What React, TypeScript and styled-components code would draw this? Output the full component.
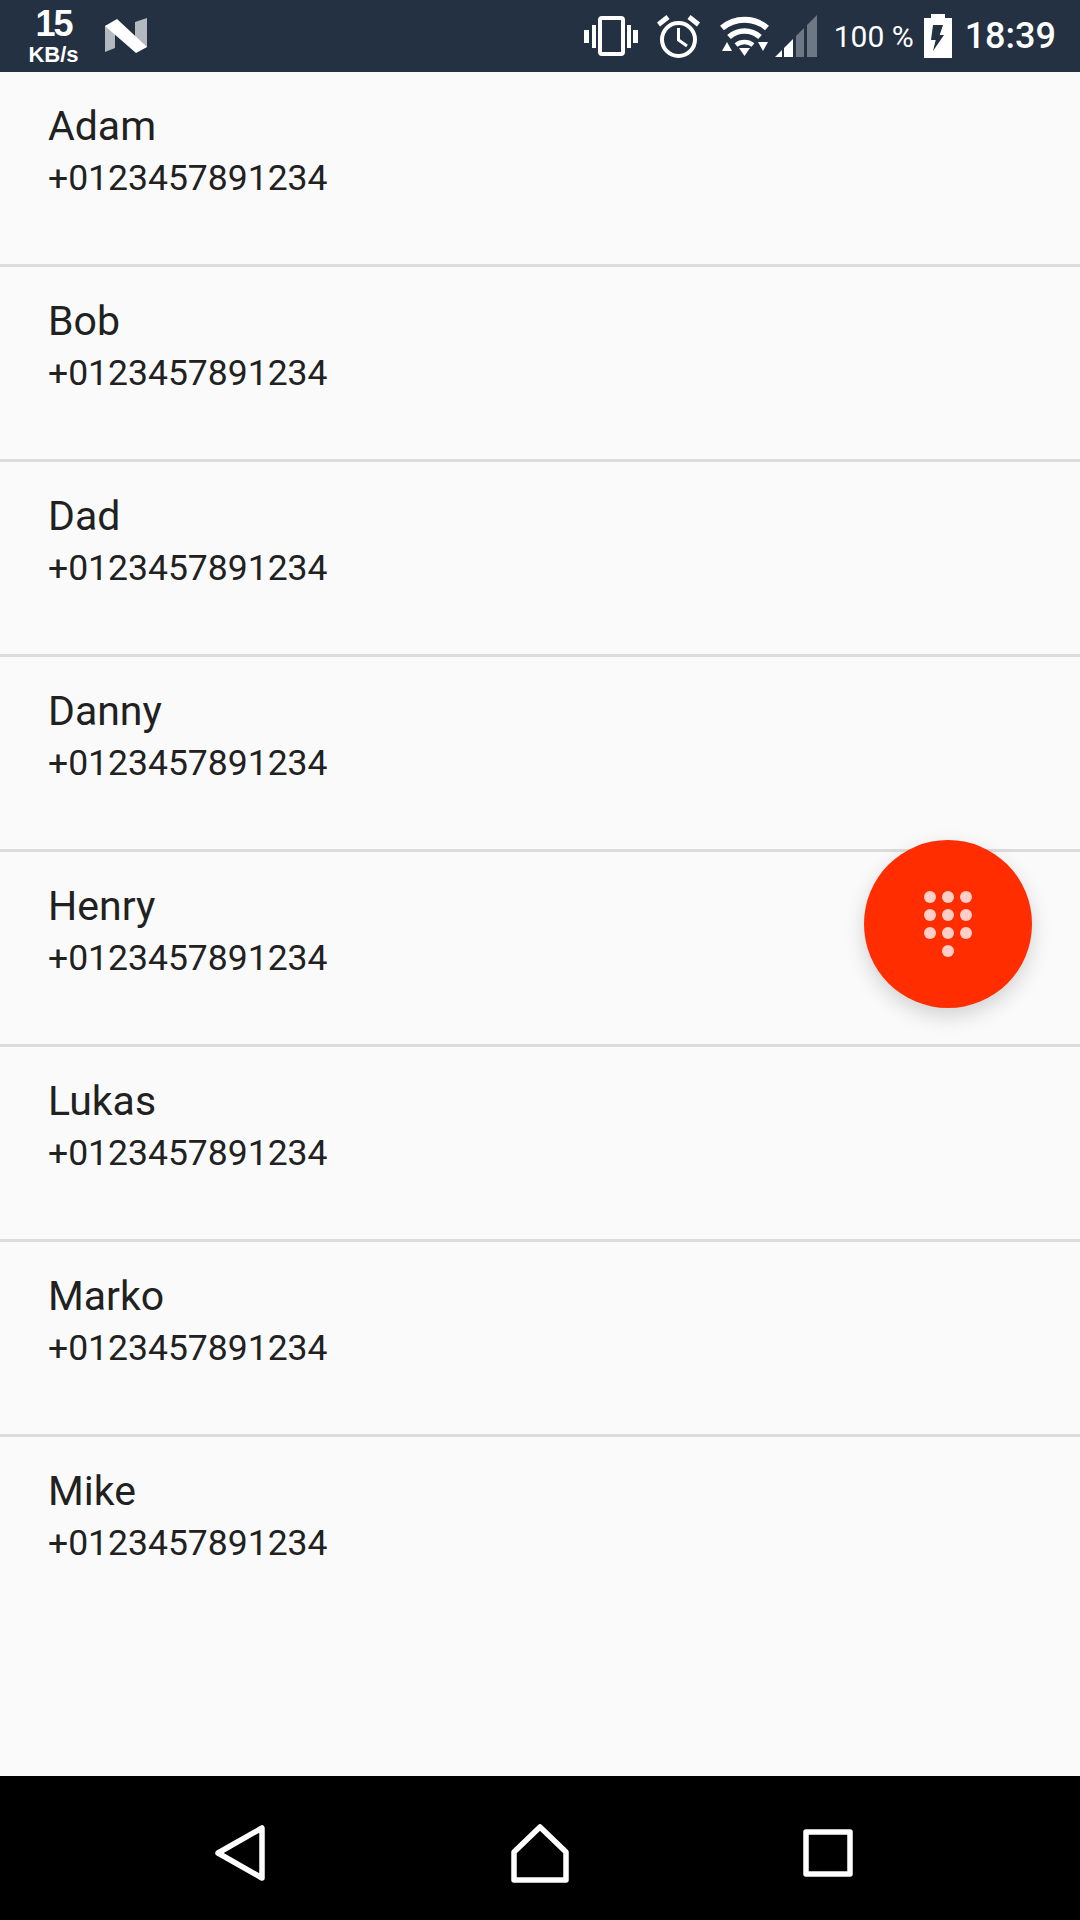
import styled, { createGlobalStyle } from 'styled-components'

const GlobalStyle = createGlobalStyle`
  html, body {
    margin: 0;
    padding: 0;
    background: #fafafa;
  }
`

const Screen = styled.div`
  position: relative;
  width: 1080px;
  height: 1920px;
  display: flex;
  flex-direction: column;
  overflow: hidden;
  background: #fafafa;
  font-family: Roboto, sans-serif;
`

const StatusBar = styled.div`
  height: 72px;
  flex: none;
  display: flex;
  align-items: center;
  padding: 0 24px 0 28px;
  background: #233142;
  color: white;
`

const NetSpeed = styled.div`
  width: 51px;
  display: flex;
  flex-direction: column;
  align-items: center;
  font-family: 'Liberation Sans', Arial, sans-serif;
  font-weight: bold;
`

const NetValue = styled.div`
  font-size: 36px;
  line-height: 36px;
  letter-spacing: -2px;
`

const NetUnit = styled.div`
  font-size: 22px;
  line-height: 25px;
`

const Spacer = styled.div`
  flex: 1;
`

const Icon = styled.svg<{ $left?: number }>`
  display: block;
  flex: none;
  margin-left: ${p => p.$left || 0}px;
`

const Percent = styled.div`
  margin-left: 16px;
  font-size: 30px;
  white-space: nowrap;
`

const Clock = styled.div`
  margin-left: 13px;
  font-size: 36px;
  font-weight: 500;
`

const ContactList = styled.div`
  flex: 1;
`

const Row = styled.div`
  height: 195px;
  box-sizing: border-box;
  padding: 29px 48px 0;
  border-bottom: 3px solid #dcdcdc;
  color: #212121;

  &:last-child {
    border-bottom: none;
  }
`

const Name = styled.div`
  font-size: 41px;
  line-height: 50px;
`

const Phone = styled.div`
  font-size: 35.5px;
  line-height: 54px;
`

const Fab = styled.div`
  position: absolute;
  left: 864px;
  top: 840px;
  width: 168px;
  height: 168px;
  border-radius: 50%;
  background: #ff2d00;
  box-shadow: 0 8px 20px rgba(0, 0, 0, 0.16);
  display: flex;
  align-items: center;
  justify-content: center;
`

const NavBar = styled.div`
  height: 144px;
  flex: none;
  box-sizing: border-box;
  padding: 10px 0 0 215px;
  background: black;
  display: grid;
  grid-template-columns: 50px 246px 58px 234px 50px;
  align-items: center;
`

const NavIcon = styled.svg<{ $column: number }>`
  grid-column: ${p => p.$column};
  display: block;
  fill: none;
  stroke: white;
  stroke-width: 5.5;
  stroke-linejoin: round;
`

const contacts = ['Adam', 'Bob', 'Dad', 'Danny', 'Henry', 'Lukas', 'Marko', 'Mike']

const dots = [
  [0, 0], [18, 0], [36, 0],
  [0, 18], [18, 18], [36, 18],
  [0, 36], [18, 36], [36, 36],
  [18, 54],
]

const App = () => (
  <Screen>
    <GlobalStyle />
    <StatusBar>
      <NetSpeed>
        <NetValue>15</NetValue>
        <NetUnit>KB/s</NetUnit>
      </NetSpeed>
      <Icon $left={25} width="44" height="36" viewBox="0 0 44 36">
        <path d="M1 8 L11 4 V30 L1 34 Z" fill="#b4b9c0" />
        <path d="M31 4 L43 0 V29 L31 33 Z" fill="#b4b9c0" />
        <path d="M1 8 L13 1 L43 29 L32 35 Z" fill="white" />
      </Icon>
      <Spacer />
      <Icon width="54" height="40" viewBox="0 0 54 40" fill="white">
        <rect x="0" y="14" width="5" height="13" />
        <rect x="8" y="9" width="4" height="23" />
        <rect x="16" y="2" width="23" height="36" rx="2" fill="none" stroke="white" strokeWidth="4" />
        <rect x="43" y="9" width="4" height="23" />
        <rect x="49" y="14" width="5" height="13" />
      </Icon>
      <Icon $left={19} width="43" height="43" viewBox="0 0 43 43" fill="none" stroke="white">
        <circle cx="21.5" cy="24.5" r="16.5" strokeWidth="4" />
        <path d="M21.5 13 V25 L30 31" strokeWidth="3" />
        <path d="M1.5 9.5 L11 2 M41.5 9.5 L32 2" strokeWidth="5" />
      </Icon>
      <Icon $left={19} width="51" height="42" viewBox="0 0 51 42" fill="none" stroke="white">
        <path d="M3 13 C16 2 35 2 48 13" strokeWidth="6" />
        <path d="M10 22 C19 14 32 14 41 22" strokeWidth="5.5" />
        <path d="M17 30 C22 26 29 26 34 30" strokeWidth="4.5" />
        <path d="M20 33 H31 L25.5 41 Z M3 36 L8 27 L13 36 Z M39 27 H49 L44 36 Z" fill="white" stroke="none" />
      </Icon>
      <Icon $left={5} width="43" height="42" viewBox="0 0 43 42">
        <path d="M0 42 L7 35 V42 Z M9 33 L18 24 V42 H9 Z" fill="white" />
        <path d="M21 21 L29 13 V42 H21 Z M32 10 L42 0 V42 H32 Z" fill="#6d7884" />
      </Icon>
      <Percent>100 %</Percent>
      <Icon $left={10} width="28" height="44" viewBox="0 0 28 44">
        <path d="M7 0 H21 V4 H28 V44 H0 V4 H7 Z" fill="white" />
        <path d="M9 11 H19 L15.7 21 H20 L9 37 L11.7 26 H7 Z" fill="#233142" />
      </Icon>
      <Clock>18:39</Clock>
    </StatusBar>
    <ContactList>
      {contacts.map(name => (
        <Row key={name}>
          <Name>{name}</Name>
          <Phone>+0123457891234</Phone>
        </Row>
      ))}
    </ContactList>
    <Fab>
      <svg width="50" height="68" viewBox="0 0 50 68" fill="#ffcfc7">
        {dots.map(([x, y]) => (
          <circle key={`${x}-${y}`} cx={x + 7} cy={y + 7} r="6" />
        ))}
      </svg>
    </Fab>
    <NavBar>
      <NavIcon $column={1} width="50" height="56" viewBox="0 0 50 56">
        <path d="M47 3 V53 L3 28 Z" />
      </NavIcon>
      <NavIcon $column={3} width="58" height="59" viewBox="0 0 58 59">
        <path d="M29 3 L55 28 V56 H3 V28 Z" />
      </NavIcon>
      <NavIcon $column={5} width="50" height="48" viewBox="0 0 50 48">
        <rect x="3" y="3" width="44" height="42" />
      </NavIcon>
    </NavBar>
  </Screen>
)

export default App
